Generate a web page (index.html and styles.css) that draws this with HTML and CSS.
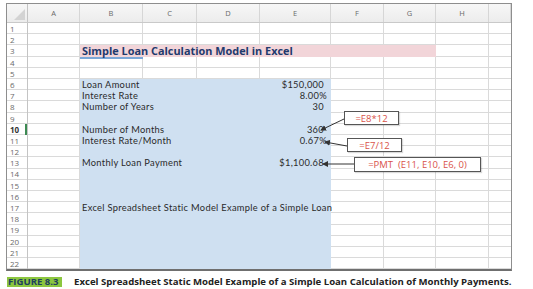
FILE: index.html
```html
<!DOCTYPE html>
<html lang="en">
  <head>
    <meta charset="UTF-8" />
    <meta name="viewport" content="width=device-width, initial-scale=1.0" />
    <title>Simple Loan Calculation Model</title>
    <link rel="stylesheet" href="styles.css">
  </head>

  <body>
    <div class="figure">
      <div class="sheet">
        <div class="head">
          <div class="corner"></div>
          <div>A</div>
          <div>B</div>
          <div>C</div>
          <div>D</div>
          <div>E</div>
          <div>F</div>
          <div>G</div>
          <div>H</div>
          <div></div>
        </div>

        <div class="body">
          <div class="rows">
            <div>1</div><div>2</div><div>3</div><div>4</div><div>5</div>
            <div>6</div><div>7</div><div>8</div><div>9</div>
            <div class="active">10</div>
            <div>11</div><div>12</div><div>13</div><div>14</div><div>15</div>
            <div>16</div><div>17</div><div>18</div><div>19</div><div>20</div>
            <div>21</div><div>22</div>
          </div>

          <div class="cells">
            <div class="v v1"></div>
            <div class="v v2"></div>
            <div class="v v3"></div>
            <div class="v v4"></div>
            <div class="v v5"></div>
            <div class="v v6"></div>
            <div class="v v7"></div>
            <div class="v v8"></div>

            <div class="fill pink"></div>
            <div class="fill blue"></div>
            <div class="sel"></div>

            <div class="title r3">Simple Loan Calculation Model in Excel</div>

            <div class="label r6">Loan Amount</div>
            <div class="value r6">$150,000</div>
            <div class="label r7">Interest Rate</div>
            <div class="value pct r7">8.00%</div>
            <div class="label r8">Number of Years</div>
            <div class="value r8">30</div>
            <div class="label r10">Number of Months</div>
            <div class="value r10">360</div>
            <div class="label r11">Interest Rate/Month</div>
            <div class="value pct r11">0.67%</div>
            <div class="label r13">Monthly Loan Payment</div>
            <div class="value r13">$1,100.68</div>
            <div class="label r17">Excel Spreadsheet Static Model Example of a Simple Loan</div>
          </div>
        </div>
      </div>

      <!-- formula callouts -->
      <div class="callout c-months">=E8*12</div>
      <div class="callout c-rate">=E7/12</div>
      <div class="callout c-pmt">=PMT&nbsp; (E11, E10, E6, 0)</div>

      <svg class="arrows" width="533" height="289" viewBox="0 0 533 289">
        <defs>
          <marker id="head" markerWidth="6" markerHeight="6" refX="5" refY="3" orient="auto">
            <path d="M0,0 L6,3 L0,6 z" fill="#333" />
          </marker>
        </defs>
        <line x1="344" y1="119" x2="321" y2="130" marker-end="url(#head)" />
        <line x1="347" y1="146" x2="325" y2="142" marker-end="url(#head)" />
        <line x1="354" y1="164" x2="323" y2="164" marker-end="url(#head)" />
      </svg>

      <p class="caption">
        <span class="fig-no">FIGURE 8.3</span>
        Excel Spreadsheet Static Model Example of a Simple Loan Calculation of Monthly Payments.
      </p>
    </div>
  </body>
</html>
```

FILE: styles.css
```css
body {
  margin: 0;
  background: #fff;
  font-family: "Open Sans", "Liberation Sans", sans-serif;
  color: #2a2a2a;
}

.figure {
  position: relative;
  width: 533px;
  height: 289px;
  padding: 3px 0 0 6px;
  box-sizing: border-box;
}

.sheet {
  width: 504px;
  border: 1px solid #8e8e8e;
  border-bottom-width: 2px;
  border-bottom-color: #6f6f6f;
}

.head {
  display: grid;
  grid-template-columns: 21px 52px 63px 54px 63px 71px 53px 52px 53px 1fr;
  height: 18px;
  background: linear-gradient(#f7f7f7, #ececec);
  border-bottom: 1px solid #c9c9c9;
  font-size: 7.5px;
  color: #6a6a6a;
}
.head div {
  display: flex;
  align-items: center;
  justify-content: center;
  border-right: 1px solid #d6d6d6;
}
.head .corner {
  position: relative;
  border-right-color: #c4c4c4;
}
.head .corner::after {
  content: "";
  position: absolute;
  right: 2px;
  bottom: 2px;
  border-left: 11px solid transparent;
  border-bottom: 11px solid #d3d3d3;
}

.body {
  display: flex;
  background: repeating-linear-gradient(to bottom, transparent 0, transparent 10.2px, #dadada 10.2px, #dadada 11.2px);
}

.rows {
  width: 21px;
  flex: none;
  border-right: 1px solid #c4c4c4;
  box-sizing: border-box;
  font-size: 8px;
  color: #6a6a6a;
}
.rows div {
  height: 11.2px;
  line-height: 11.2px;
  padding-left: 3px;
  box-sizing: border-box;
}
.rows .active {
  font-weight: 700;
  color: #333;
  border-right: 2px solid #3c8a52;
}

.cells {
  flex: 1;
  display: grid;
  grid-template-columns: 52px 63px 54px 63px 71px 53px 52px 53px 1fr;
  grid-template-rows: repeat(22, 11.2px);
  font-family: Lato, "Open Sans", sans-serif;
  font-size: 9.3px;
  letter-spacing: 0.3px;
}

.v { grid-row: 1 / -1; border-right: 1px solid #dadada; }
.v1 { grid-column: 1; }
.v2 { grid-column: 2; }
.v3 { grid-column: 3; }
.v4 { grid-column: 4; }
.v5 { grid-column: 5; }
.v6 { grid-column: 6; }
.v7 { grid-column: 7; }
.v8 { grid-column: 8; }

.fill.pink {
  grid-column: 2 / 8;
  grid-row: 3;
  background: #f2d5d9;
}
.fill.blue {
  grid-column: 2 / 6;
  grid-row: 6 / 23;
  background: #cfe0f1;
}
.sel {
  grid-column: 2;
  grid-row: 4;
  border-top: 2px solid #7ba7d8;
}

.r3 { grid-row: 3; }
.r6 { grid-row: 6; }
.r7 { grid-row: 7; }
.r8 { grid-row: 8; }
.r10 { grid-row: 10; }
.r11 { grid-row: 11; }
.r13 { grid-row: 13; }
.r17 { grid-row: 17; }

.title,
.label {
  grid-column: 2;
  white-space: nowrap;
  padding-left: 2px;
  line-height: 11.2px;
}
.title {
  font-family: "Open Sans", sans-serif;
  font-size: 10.9px;
  letter-spacing: 0;
  font-weight: 700;
  color: #1f3a6d;
}

.value {
  grid-column: 5;
  text-align: right;
  padding-right: 7px;
  line-height: 11.2px;
}
.value.pct { padding-right: 4px; }

.callout {
  position: absolute;
  box-sizing: border-box;
  border: 1px solid #555;
  background: #fff;
  box-shadow: 1px 1px 1px rgba(0, 0, 0, 0.15);
  color: #d9534a;
  font-size: 9.5px;
  display: flex;
  align-items: center;
  justify-content: center;
  white-space: nowrap;
}
.c-months { left: 344px; top: 111px; width: 55px; height: 14px; }
.c-rate { left: 347px; top: 138px; width: 55px; height: 14px; }
.c-pmt { left: 354px; top: 157px; width: 127px; height: 15px; }

.arrows {
  position: absolute;
  left: 0;
  top: 0;
  pointer-events: none;
}
.arrows line {
  stroke: #333;
  stroke-width: 1;
}

.caption {
  margin: 4px 0 0 1px;
  font-size: 9.6px;
  font-weight: 700;
  color: #222;
  white-space: nowrap;
}
.fig-no {
  display: inline-block;
  background: #8cc63f;
  color: #1d4060;
  padding: 0 3px 0 1px;
  margin-right: 10px;
  line-height: 10px;
}
```
